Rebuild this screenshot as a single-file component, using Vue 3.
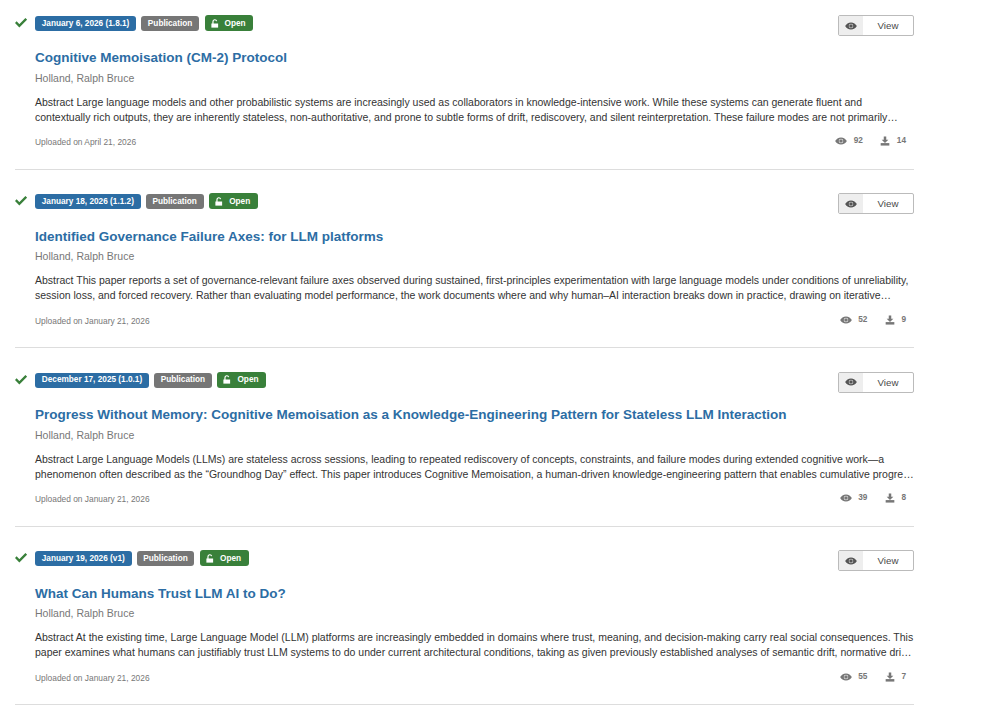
<script setup>
const items = [
  { date: 'January 6, 2026 (1.8.1)', title: 'Cognitive Memoisation (CM-2) Protocol', abstract: 'Abstract Large language models and other probabilistic systems are increasingly used as collaborators in knowledge-intensive work. While these systems can generate fluent and contextually rich outputs, they are inherently stateless, non-authoritative, and prone to subtle forms of drift, rediscovery, and silent reinterpretation. These failure modes are not primarily…', uploaded: 'April 21, 2026', views: 92, downloads: 14 },
  { date: 'January 18, 2026 (1.1.2)', title: 'Identified Governance Failure Axes: for LLM platforms', abstract: 'Abstract This paper reports a set of governance-relevant failure axes observed during sustained, first-principles experimentation with large language models under conditions of unreliability, session loss, and forced recovery. Rather than evaluating model performance, the work documents where and why human–AI interaction breaks down in practice, drawing on iterative…', uploaded: 'January 21, 2026', views: 52, downloads: 9 },
  { date: 'December 17, 2025 (1.0.1)', title: 'Progress Without Memory: Cognitive Memoisation as a Knowledge-Engineering Pattern for Stateless LLM Interaction', abstract: 'Abstract Large Language Models (LLMs) are stateless across sessions, leading to repeated rediscovery of concepts, constraints, and failure modes during extended cognitive work—a phenomenon often described as the “Groundhog Day” effect. This paper introduces Cognitive Memoisation, a human-driven knowledge-engineering pattern that enables cumulative progre…', uploaded: 'January 21, 2026', views: 39, downloads: 8 },
  { date: 'January 19, 2026 (v1)', title: 'What Can Humans Trust LLM AI to Do?', abstract: 'Abstract At the existing time, Large Language Model (LLM) platforms are increasingly embedded in domains where trust, meaning, and decision-making carry real social consequences. This paper examines what humans can justifiably trust LLM systems to do under current architectural conditions, taking as given previously established analyses of semantic drift, normative dri…', uploaded: 'January 21, 2026', views: 55, downloads: 7 }
]
const eyePath = 'M8 3.200C4.500 3.200 1.700 5.200 .2 8c1.500 2.800 4.300 4.800 7.800 4.800s6.300-2 7.800-4.800C14.300 5.200 11.500 3.200 8 3.200zM8 5a3 3 0 1 1 0 6 3 3 0 0 1 0-6zM8 5.600a2.400 2.400 0 1 0 0 4.800 2.400 2.400 0 0 0 0-4.800z'
</script>

<template>
  <div class="list">
    <div v-for="item in items" :key="item.title" class="item">
      <svg class="check" viewBox="0 0 16 16" aria-hidden="true">
        <path d="M1 8.200 5.800 13 15 3.800" fill="none" stroke="#39803a" stroke-width="3.200" />
      </svg>
      <div class="body">
        <div class="top">
          <div class="badges">
            <span class="badge date">{{ item.date }}</span>
            <span class="badge type">Publication</span>
            <span class="badge open">
              <svg class="lock" viewBox="0 0 12 12" aria-hidden="true">
                <path d="M.5 6h9v5.500h-9z" fill="#fff" />
                <path d="M2.600 6.500V3.500a2.500 2.500 0 0 1 4.900-.7" fill="none" stroke="#fff" stroke-width="1.600" />
              </svg>
              Open
            </span>
          </div>
          <div class="view">
            <span class="view-icon">
              <svg class="eye" viewBox="0 0 16 16" aria-hidden="true"><path :d="eyePath" fill="#555" fill-rule="evenodd" /></svg>
            </span>
            <span class="view-label">View</span>
          </div>
        </div>
        <h2 class="title">{{ item.title }}</h2>
        <p class="author">Holland, Ralph Bruce</p>
        <p class="abstract">{{ item.abstract }}</p>
        <div class="foot">
          <span class="uploaded">Uploaded on {{ item.uploaded }}</span>
          <div class="stats">
            <span class="stat">
              <svg class="eye" viewBox="0 0 16 16" aria-hidden="true"><path :d="eyePath" fill="#777" fill-rule="evenodd" /></svg>
              {{ item.views }}
            </span>
            <span class="stat">
              <svg class="dl" viewBox="0 0 12 12" aria-hidden="true">
                <path d="M4.500 .5h3v4h2.500L6 8.500 2 4.500h2.500z" fill="#777" />
                <path d="M.8 8.500h10.400v3H.8z" fill="#777" />
              </svg>
              {{ item.downloads }}
            </span>
          </div>
        </div>
      </div>
    </div>
  </div>
</template>

<style>
body { background: #fff; }
</style>

<style scoped>
.list {
  width: 899px;
  margin-left: 15px;
  padding-top: 15px;
  font-family: "Liberation Sans", Arial, sans-serif;
  color: #333;
}
.item {
  display: flex;
  height: 153.900px;
  margin-bottom: 23.500px;
  border-bottom: 1px solid #ddd;
  box-sizing: content-box;
}
.check { width: 12px; height: 12px; margin: 1px 8px 0 0; flex: none; }
.body { flex: 1; min-width: 0; }
.top { display: flex; justify-content: space-between; align-items: flex-start; height: 21px; }
.badges { display: flex; gap: 5px; align-items: center; padding-top: 1px; }
.badge {
  display: inline-flex;
  align-items: center;
  height: 15px;
  box-sizing: border-box;
  padding: 0 6.750px 1px;
  border-radius: 3px;
  color: #fff;
  font-size: 8.250px;
  font-weight: 700;
  white-space: nowrap;
}
.date { background: #2c6da4; }
.type { background: #767676; }
.open {
  background: #39803a;
  height: 16px;
  margin: -1px 0 0 .5px;
  gap: 5px;
  padding: 0 7.500px 0 6px;
}
.lock { width: 9px; height: 9px; }
.view {
  display: flex;
  width: 76px;
  height: 21px;
  box-sizing: border-box;
  border: 1px solid #bbb;
  border-radius: 2px;
  overflow: hidden;
}
.view-icon { width: 24px; background: #eee; display: flex; align-items: center; justify-content: center; }
.view-label { flex: 1; text-align: center; font-size: 9.750px; line-height: 19px; color: #4a4a4a; }
.eye { width: 12px; height: 12px; }
.title { margin: 13.450px 0 0; font-size: 13.500px; line-height: 18px; font-weight: 700; color: #2c6da4; }
.author { margin: 3.350px 0 0; font-size: 10.500px; line-height: 15px; color: #777; }
.abstract { margin: 9px 0 0; font-size: 10.500px; line-height: 15px; color: #333; }
.foot { display: flex; justify-content: space-between; align-items: flex-start; margin-top: 9.650px; }
.uploaded { font-size: 8.400px; line-height: 17px; color: #777; }
.stats { display: flex; gap: 17.500px; padding: 1px 8px 0 0; }
.stat { display: inline-flex; align-items: center; gap: 6.500px; font-size: 8.250px; font-weight: 700; color: #777; line-height: 12px; }
.dl { width: 10px; height: 10px; }
</style>
